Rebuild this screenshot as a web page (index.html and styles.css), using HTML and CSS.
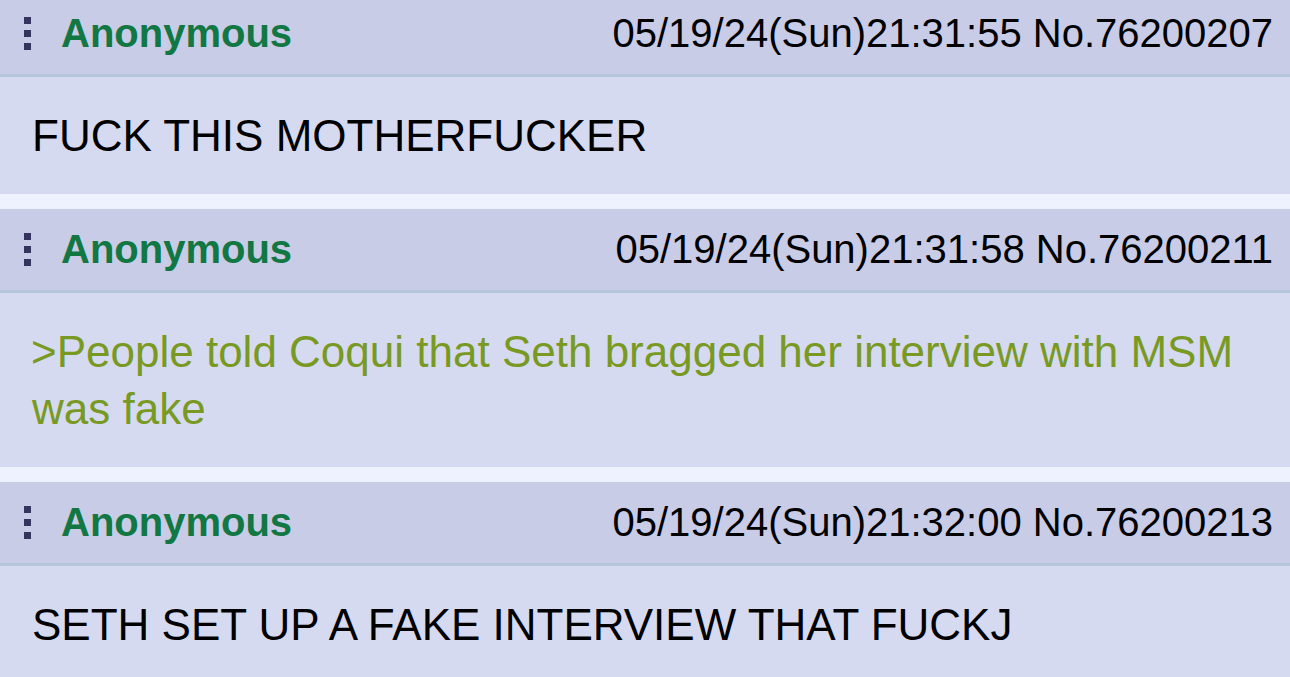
FILE: index.html
```html
<!DOCTYPE html>
<html lang="en">
<head>
    <meta charset="UTF-8">
    <meta name="viewport" content="width=device-width, initial-scale=1.0">
    <title>Thread</title>
    <link rel="stylesheet" href="styles.css">
</head>
<body>
    <div class="thread">
        <!-- Post 76200207 -->
        <div class="post first">
            <div class="postInfo">
                <div class="left">
                    <span class="menu"><i></i><i></i><i></i></span>
                    <span class="name">Anonymous</span>
                </div>
                <span class="dateTime">05/19/24(Sun)21:31:55 No.76200207</span>
            </div>
            <blockquote class="postMessage">FUCK THIS MOTHERFUCKER</blockquote>
        </div>

        <!-- Post 76200211 -->
        <div class="post">
            <div class="postInfo">
                <div class="left">
                    <span class="menu"><i></i><i></i><i></i></span>
                    <span class="name">Anonymous</span>
                </div>
                <span class="dateTime">05/19/24(Sun)21:31:58 No.76200211</span>
            </div>
            <blockquote class="postMessage"><span class="quote">&gt;People told Coqui that Seth bragged her interview with MSM was fake</span></blockquote>
        </div>

        <!-- Post 76200213 -->
        <div class="post">
            <div class="postInfo">
                <div class="left">
                    <span class="menu"><i></i><i></i><i></i></span>
                    <span class="name">Anonymous</span>
                </div>
                <span class="dateTime">05/19/24(Sun)21:32:00 No.76200213</span>
            </div>
            <blockquote class="postMessage">SETH SET UP A FAKE INTERVIEW THAT FUCKJ</blockquote>
        </div>
    </div>
</body>
</html>
```

FILE: styles.css
```css
body {
    margin: 0;
    background-color: #eef2ff;
    font-family: 'Liberation Sans', Arial, sans-serif;
    color: #000;
    overflow: hidden;
}
.thread {
    display: flex;
    flex-direction: column;
    gap: 15px;
}
.post {
    background-color: #d6daf0;
}
.post.first {
    margin-top: -7px; /* top of first post is cut off */
}
.postInfo {
    display: flex;
    justify-content: space-between;
    align-items: center;
    height: 81px;
    padding: 0 17px 0 24px;
    background-color: #c9cce7;
    border-bottom: 3px solid #b7c5d9;
    font-size: 40px;
}
.left {
    display: flex;
    align-items: center;
}
.menu {
    display: flex;
    flex-direction: column;
    gap: 6px;
    width: 7px;
    margin-right: 30px;
}
.menu i {
    display: block;
    width: 7px;
    height: 7px;
    background-color: #34345f;
}
.name {
    color: #117743;
    font-weight: bold;
}
.dateTime {
    color: #000;
}
.postMessage {
    margin: 0;
    padding: 30px 40px 30px 32px;
    font-size: 44px;
    line-height: 57px;
}
.quote {
    color: #789922;
    margin-left: -1px;
}
```
